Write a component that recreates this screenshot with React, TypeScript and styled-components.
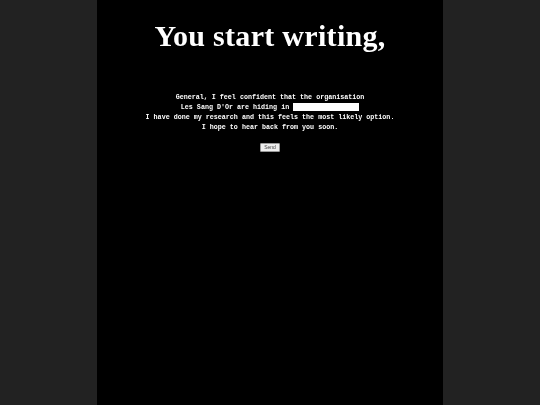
import React from "react";
import styled, { createGlobalStyle } from "styled-components";

const Global = createGlobalStyle`
  html, body { margin: 0; padding: 0; background: #222222; height: 100%; }
  #root { height: 100%; }
`;

const Column = styled.main`
  width: 346px;
  min-height: 405px;
  margin: 0 auto;
  background: #000;
  color: #fff;
  display: flex;
  flex-direction: column;
  align-items: center;
  padding-top: 20px;
  box-sizing: border-box;
  will-change: transform;
  -webkit-font-smoothing: antialiased;
`;

const Title = styled.h1`
  margin: 0;
  font-family: "Liberation Serif", Georgia, serif;
  font-weight: bold;
  font-size: 30px;
  line-height: 32px;
  letter-spacing: 0.3px;
`;

const Letter = styled.form`
  margin-top: 40px;
  display: flex;
  flex-direction: column;
  align-items: center;
  font-family: "Liberation Mono", "Courier New", monospace;
  font-weight: bold;
  font-size: 6.7px;
  line-height: 10px;
  text-align: center;
  color: #fff;
`;

const Line = styled.div`
  display: flex;
  align-items: center;
  white-space: pre;
`;

const Blank = styled.input`
  width: 66px;
  height: 8px;
  margin-left: 4px;
  padding: 0;
  border: 0;
  background: #fff;
  box-sizing: border-box;
`;

const Send = styled.button`
  margin-top: 11px;
  width: 20px;
  height: 9px;
  padding: 0;
  border: 1px solid #999;
  border-radius: 1px;
  background: #efefef;
  color: #444;
  font-family: "Liberation Sans", Arial, sans-serif;
  font-size: 5px;
  line-height: 7px;
`;

export default function App() {
  return (
    <>
      <Global />
      <Column>
        <Title>You start writing,</Title>
        <Letter onSubmit={(e) => e.preventDefault()}>
          <Line>General, I feel confident that the organisation</Line>
          <Line>
            Les Sang D'Or are hiding in
            <Blank type="text" />
          </Line>
          <Line>I have done my research and this feels the most likely option.</Line>
          <Line>I hope to hear back from you soon.</Line>
          <Send type="submit">Send</Send>
        </Letter>
      </Column>
    </>
  );
}
